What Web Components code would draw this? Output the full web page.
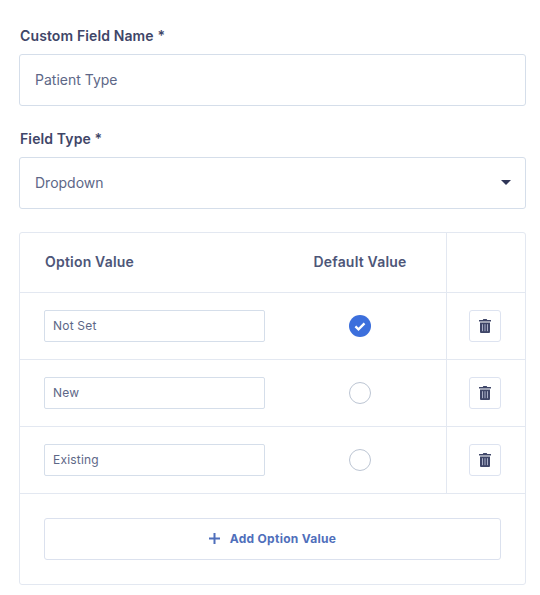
<!DOCTYPE html>
<html>
<head>
<meta charset="utf-8">
<title>Custom Field</title>
<style>
html,body{margin:0;background:#fff;}
body{font-family:Inter,"Noto Sans",sans-serif;color:#3f4668;}
</style>
</head>
<body>
<custom-field-form>
    <form-field label="Custom Field Name *">Patient Type</form-field>
    <form-field label="Field Type *" dropdown>Dropdown</form-field>
    <option-table>
        <option-row checked>Not Set</option-row>
        <option-row>New</option-row>
        <option-row>Existing</option-row>
    </option-table>
</custom-field-form>

<script>
const templateForm = document.createElement('template');
templateForm.innerHTML = `
<style>
:host{
    display:flex;
    flex-direction:column;
    width:507px;
    padding:26px 14px 0 19px;
}
</style>
<slot></slot>
`;
class CustomFieldForm extends HTMLElement{
    constructor(){
        super();
        this.attachShadow({mode:'open'});
        this.shadowRoot.appendChild(templateForm.content.cloneNode(true));
    }
}
window.customElements.define('custom-field-form',CustomFieldForm);

const templateField = document.createElement('template');
templateField.innerHTML = `
<style>
:host{
    display:block;
    margin-bottom:23px;
}
.label{
    margin:0 0 9px 1px;
    height:19px;
    line-height:19px;
    font-size:14px;
    font-weight:600;
    letter-spacing:0.12px;
    color:#3f4668;
}
.box{
    box-sizing:border-box;
    height:52px;
    display:flex;
    align-items:center;
    justify-content:space-between;
    padding:0 15px 2px;
    border:1px solid #d5deea;
    border-radius:3px;
    font-size:14px;
    color:#5d6787;
}
.arrow{
    display:none;
    width:0;
    height:0;
    margin-right:-1px;
    margin-top:1px;
    border-left:5px solid transparent;
    border-right:5px solid transparent;
    border-top:5px solid #2f3557;
}
:host([dropdown]) .arrow{
    display:block;
}
</style>
<p class="label"></p>
<div class="box"><span><slot></slot></span><span class="arrow"></span></div>
`;
class FormField extends HTMLElement{
    constructor(){
        super();
        this.attachShadow({mode:'open'});
        this.shadowRoot.appendChild(templateField.content.cloneNode(true));
    }
    connectedCallback(){
        this.shadowRoot.querySelector('.label').innerHTML = this.getAttribute('label');
    }
}
window.customElements.define('form-field',FormField);

const templateTable = document.createElement('template');
templateTable.innerHTML = `
<style>
:host{
    display:block;
    box-sizing:border-box;
    height:353px;
    border:1px solid #e3e8f1;
    border-radius:3px;
}
.head{
    display:grid;
    grid-template-columns:254px 172px 79px;
    height:60px;
    border-bottom:1px solid #e3e8f1;
    box-sizing:border-box;
    font-size:14px;
    font-weight:600;
    letter-spacing:0.2px;
    color:#4d5678;
}
.head div{
    display:flex;
    align-items:center;
    padding-bottom:2px;
}
.head .first{
    padding-left:25px;
}
.head .second{
    justify-content:center;
}
.head .third{
    border-left:1px solid #e3e8f1;
}
.foot{
    padding:24px 24px 0;
}
</style>
<div class="head">
    <div class="first">Option Value</div>
    <div class="second">Default Value</div>
    <div class="third"></div>
</div>
<slot></slot>
<div class="foot"><add-button>Add Option Value</add-button></div>
`;
class OptionTable extends HTMLElement{
    constructor(){
        super();
        this.attachShadow({mode:'open'});
        this.shadowRoot.appendChild(templateTable.content.cloneNode(true));
    }
}
window.customElements.define('option-table',OptionTable);

const templateRow = document.createElement('template');
templateRow.innerHTML = `
<style>
:host{
    display:grid;
    grid-template-columns:254px 172px 79px;
    box-sizing:border-box;
    height:67px;
    border-bottom:1px solid #e3e8f1;
}
.value,.radio-cell,.action{
    display:flex;
    align-items:center;
}
.value{
    padding-left:24px;
}
.input{
    box-sizing:border-box;
    width:221px;
    height:32px;
    display:flex;
    align-items:center;
    padding:0 8px 2px;
    border:1px solid #d5deea;
    border-radius:2px;
    font-size:12px;
    letter-spacing:0.2px;
    color:#5d6787;
}
.radio-cell{
    justify-content:center;
}
.radio{
    box-sizing:border-box;
    width:22px;
    height:22px;
    border:1px solid #bcc5d3;
    border-radius:50%;
}
.check{
    display:none;
    width:22px;
    height:22px;
}
:host([checked]) .radio{
    display:none;
}
:host([checked]) .check{
    display:block;
}
.action{
    justify-content:center;
    border-left:1px solid #e3e8f1;
    padding-right:2px;
}
.trash{
    box-sizing:border-box;
    width:32px;
    height:32px;
    display:flex;
    align-items:center;
    justify-content:center;
    border:1px solid #dde3f0;
    border-radius:3px;
}
</style>
<div class="value"><div class="input"><slot></slot></div></div>
<div class="radio-cell">
    <span class="radio"></span>
    <svg class="check" viewBox="0 0 22 22">
        <circle cx="11" cy="11" r="11" fill="#3c6fdc"/>
        <path d="M6.4 11.4l3.1 3 6-6" fill="none" stroke="#fff" stroke-width="2.3"/>
    </svg>
</div>
<div class="action">
    <div class="trash">
        <svg width="12" height="14" viewBox="0 0 12 14">
            <path d="M4.3 0h3.4l.5 1H12v1.6H0V1h3.8z" fill="#3f4668"/>
            <path d="M1 3.6h10V13a1 1 0 0 1-1 1H2a1 1 0 0 1-1-1z" fill="#3f4668"/>
            <path d="M3.5 5.2v7M6 5.2v7M8.5 5.2v7" stroke="#a9aec6" stroke-width="1"/>
        </svg>
    </div>
</div>
`;
class OptionRow extends HTMLElement{
    constructor(){
        super();
        this.attachShadow({mode:'open'});
        this.shadowRoot.appendChild(templateRow.content.cloneNode(true));
    }
}
window.customElements.define('option-row',OptionRow);

const templateAdd = document.createElement('template');
templateAdd.innerHTML = `
<style>
:host{
    display:flex;
    box-sizing:border-box;
    height:42px;
    align-items:center;
    justify-content:center;
    gap:10px;
    padding-bottom:2px;
    border:1px solid #dbe1ee;
    border-radius:3px;
    font-size:12px;
    font-weight:700;
    letter-spacing:0.28px;
    color:#4f6fbb;
}
</style>
<svg width="11" height="11" viewBox="0 0 11 11">
    <path d="M5.5 0v11M0 5.5h11" stroke="#4f6fbb" stroke-width="2"/>
</svg>
<span><slot></slot></span>
`;
class AddButton extends HTMLElement{
    constructor(){
        super();
        this.attachShadow({mode:'open'});
        this.shadowRoot.appendChild(templateAdd.content.cloneNode(true));
    }
}
window.customElements.define('add-button',AddButton);
</script>
</body>
</html>
